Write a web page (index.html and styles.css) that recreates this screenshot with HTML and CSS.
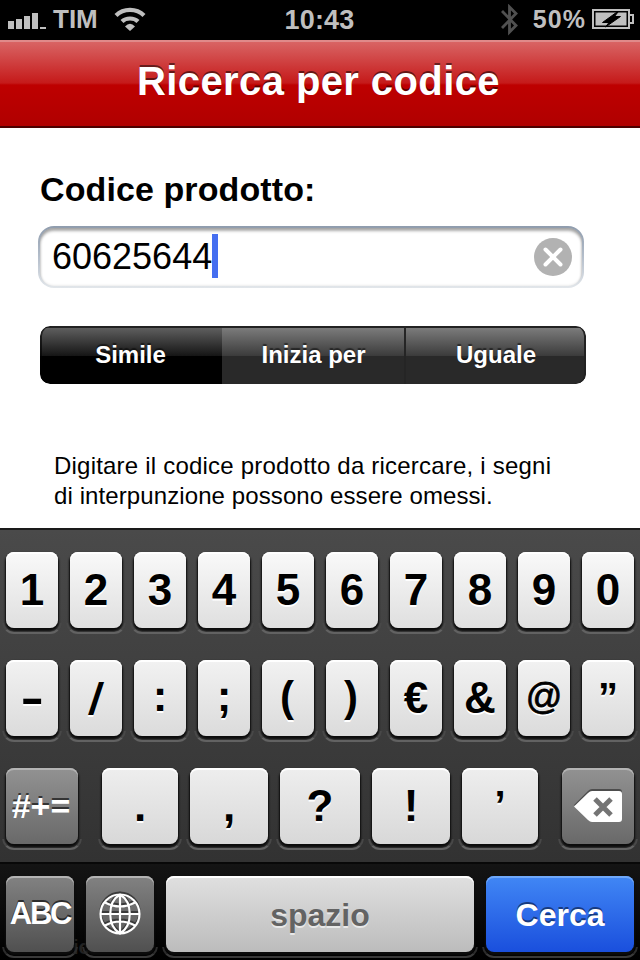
FILE: index.html
```html
<!DOCTYPE html>
<html lang="it">
<head>
    <meta charset="UTF-8">
    <title>Ricerca per codice</title>
    <link rel="stylesheet" href="styles.css">
</head>
<body>

    <div class="status">
        <div class="left">
            <svg class="signal" width="38" height="16" viewBox="0 0 38 16">
                <path d="M0 8h6v8H0zM8 6h6v10H8zM16 3h6v13h-6zM24 0h6v16h-6zM32 14h6v2h-6z"/>
            </svg>
            <span class="carrier">TIM</span>
            <svg class="wifi" width="32" height="24" viewBox="0 0 32 24">
                <path class="arc" d="M2 8.500C9.500 1 22.500 1 30 8.500M8 14.500C12 10.500 20 10.500 24 14.500"/>
                <path d="M11 19.500Q16 14 21 19.500L16 24z"/>
            </svg>
        </div>
        <div class="clock">10:43</div>
        <div class="right">
            <svg class="bluetooth" width="18" height="32" viewBox="0 0 18 32">
                <path d="M1 7L15 21.500L8.500 28V3L15 9.500L1 24"/>
            </svg>
            <span class="percent">50%</span>
            <svg class="battery" width="42" height="20" viewBox="0 0 42 20">
                <path class="case" d="M1 1h36v18H1zM38 6h3v8h-3"/>
                <path d="M3.500 3.500h31v13h-31z"/>
                <path class="bolt" d="M25 3L10.500 13.500H17L13.500 18L28.500 7.500H22.500L26 3z"/>
            </svg>
        </div>
    </div>

    <h1 class="navbar">Ricerca per codice</h1>

    <div class="content">
        <h2 class="label">Codice prodotto:</h2>
        <div class="field">
            <span class="value">60625644</span>
            <span class="caret"></span>
            <svg class="clear" width="38" height="38" viewBox="0 0 38 38">
                <circle cx="19" cy="19" r="19"/>
                <path d="M11.500 11.500L26.500 26.500M26.500 11.500L11.500 26.500"/>
            </svg>
        </div>
        <div class="segments">
            <div class="segment selected">Simile</div>
            <div class="segment">Inizia per</div>
            <div class="segment">Uguale</div>
        </div>
        <p class="hint">Digitare il codice prodotto da ricercare, i segni<br><span class="tight">di interpunzione possono essere omessi.</span></p>
    </div>

    <div class="keyboard">
        <div class="row">
            <div class="key">1</div>
            <div class="key">2</div>
            <div class="key">3</div>
            <div class="key">4</div>
            <div class="key">5</div>
            <div class="key">6</div>
            <div class="key">7</div>
            <div class="key">8</div>
            <div class="key">9</div>
            <div class="key">0</div>
        </div>
        <div class="row second">
            <div class="key"><span class="hyphen">-</span></div>
            <div class="key"><span class="slash">/</span></div>
            <div class="key raised">:</div>
            <div class="key raised">;</div>
            <div class="key paren">(</div>
            <div class="key paren">)</div>
            <div class="key">€</div>
            <div class="key">&amp;</div>
            <div class="key at">@</div>
            <div class="key quote">”</div>
        </div>
        <div class="row third">
            <div class="key dark symbols">#+=</div>
            <div class="key w76 first">.</div>
            <div class="key w78">,</div>
            <div class="key w80">?</div>
            <div class="key w78">!</div>
            <div class="key w76 quote">’</div>
            <div class="key dark delete">
                <svg width="48" height="34" viewBox="0 0 48 34">
                    <path class="shade" d="M0 16L14 2Q16 0 18 0H45Q48 0 48 3V28Q48 32 45 32H18Q16 32 14 30z"/>
                    <path class="shape" d="M0 17.500L14 4Q16 2 18 2H45Q48 2 48 5V30Q48 33 45 33H18Q16 33 14 31z"/>
                    <path class="cross" d="M21 10L37 26M37 10L21 26"/>
                </svg>
            </div>
        </div>
        <div class="row bottom">
            <span class="behind">ic</span>
            <div class="key dark abc">ABC</div>
            <div class="key dark globe">
                <svg width="42" height="44" viewBox="0 0 42 44">
                    <defs>
                        <g id="globe">
                            <circle cx="21" cy="21" r="19.500"/>
                            <path d="M21 1.500V40.500M1.500 21H40.500M21 1.500C8 9 8 33 21 40.500C34 33 34 9 21 1.500M6 9.500Q21 17.500 36 9.500M6 32.500Q21 24.500 36 32.500"/>
                        </g>
                    </defs>
                    <use class="shade" href="#globe"/>
                    <use class="lines" href="#globe" y="2"/>
                </svg>
            </div>
            <div class="key space">spazio</div>
            <div class="key search">Cerca</div>
        </div>
    </div>

</body>
</html>
```
FILE: styles.css
```css
*{
    margin: 0;
    padding: 0;
    box-sizing: border-box;
}
body{
    width: 640px;
    height: 960px;
    overflow: hidden;
    background-color: #fff;
    font-family: "Liberation Sans", Arial, sans-serif;
    color: #000;
}

/* status bar */
.status{
    display: grid;
    grid-template-columns: 1fr auto 1fr;
    height: 40px;
    padding: 0 6px 0 8px;
    background-color: #000;
    color: #bfbfbf;
    font-weight: bold;
    line-height: 38px;
}
.status svg{
    fill: #bfbfbf;
}
.left,.right{
    display: flex;
    align-items: flex-start;
}
.right{
    justify-content: flex-end;
}
.signal{
    margin-top: 13px;
}
.carrier{
    margin-left: 7px;
    font-size: 26px;
}
.wifi{
    margin: 7px 0 0 16px;
}
.wifi .arc{
    fill: none;
    stroke: #bfbfbf;
    stroke-width: 4.2;
}
.clock{
    padding-right: 3px;
    font-size: 27px;
    line-height: 40px;
    letter-spacing: .2px;
}
.bluetooth{
    margin: 4px 14px 0 0;
}
.status .bluetooth{
    fill: none;
    stroke: #505050;
    stroke-width: 2.8;
}
.percent{
    margin-right: 6px;
    font-size: 25px;
    letter-spacing: 1.1px;
}
.battery{
    margin-top: 9px;
}
.battery .case{
    fill: none;
    stroke: #bfbfbf;
    stroke-width: 2;
}
.battery .bolt{
    fill: #000;
    stroke: #000;
    stroke-linejoin: round;
}

/* title */
.navbar{
    height: 88px;
    padding-right: 3px;
    border-top: 2px solid #e08a8a;
    border-bottom: 2px solid #4c0000;
    background: linear-gradient(#d96464, #c51a1a 41px, #be0000 43px, #b00000);
    color: #fff;
    font-size: 40px;
    line-height: 79px;
    letter-spacing: .4px;
    text-align: center;
    text-shadow: 0 -2px 0 rgba(0,0,0,.5);
}

/* form */
.content{
    height: 400px;
    padding: 42px 54px 0 38px;
}
.label{
    padding-left: 2px;
    font-size: 34px;
    line-height: 38px;
    letter-spacing: .1px;
}
.field{
    display: flex;
    align-items: center;
    width: 546px;
    height: 62px;
    margin-top: 18px;
    padding: 0 10px 0 12px;
    border: 2px solid transparent;
    border-radius: 16px;
    background: linear-gradient(#fff, #fff) padding-box, linear-gradient(#8f9cad, #b4becb 50%, #e2e6ea) border-box;
    box-shadow: inset 0 3px 3px rgba(0,0,0,.32), inset 0 0 3px rgba(0,0,0,.15);
}
.value{
    font-size: 36px;
    line-height: 58px;
}
.caret{
    width: 6px;
    height: 44px;
    margin-bottom: 2px;
    background-color: #456ef0;
}
.clear{
    margin-left: auto;
    fill: #b2b2b2;
}
.clear path{
    stroke: #fff;
    stroke-width: 4;
    stroke-linecap: round;
}
.segments{
    display: grid;
    grid-template-columns: 182px 182px 182px;
    width: 546px;
    height: 58px;
    margin: 38px 0 0 2px;
    border-radius: 10px;
    overflow: hidden;
}
.segment{
    background: linear-gradient(#222 2px, #7b7b7b 2px, #3b3b3b 30px, #292929 30px, #292929);
    color: #fff;
    font-size: 24px;
    font-weight: bold;
    line-height: 58px;
    text-align: center;
    text-shadow: 0 -2px 1px rgba(0,0,0,.5);
}
.segment + .segment{
    padding-left: 1px;
}
.segment + .segment + .segment{
    padding-left: 0;
    border-left: 2px solid #252525;
    border-radius: 0 10px 10px 0;
    box-shadow: inset -2px 0 0 #222;
}
.segment.selected{
    padding-right: 1px;
    background: linear-gradient(#222 2px, #5e5e5e 2px, #151515 30px, #000 30px, #000);
    border-radius: 10px 0 0 10px;
    box-shadow: inset 2px 0 0 rgba(0,0,0,.6);
}
.hint{
    padding: 67px 0 0 16px;
    font-size: 24px;
    line-height: 30px;
    letter-spacing: .21px;
    white-space: nowrap;
}
.tight{
    letter-spacing: .1px;
}

/* keyboard */
.keyboard{
    height: 432px;
    border-top: 2px solid #1a1a1a;
    background: linear-gradient(#4a4a4a, #323232 332px, #080808 332px, #080808 334px, #141414 334px, #000);
}
.row{
    display: flex;
    gap: 12px;
    height: 108px;
    padding: 22px 6px 0;
}
.key{
    position: relative;
    display: flex;
    justify-content: center;
    width: 52px;
    height: 76px;
    border-radius: 8px;
    background: linear-gradient(#f9f9f9, #dfdfdf);
    box-shadow: inset 0 2px 0 #fff, 0 2px 2px 1px #0c0c0c;
    font-size: 44px;
    font-weight: bold;
    line-height: 76px;
    text-shadow: 0 2px 0 #fff;
}
/* lit rim of the well each key sits in */
.key::after{
    content: "";
    position: absolute;
    left: -4px;
    right: -4px;
    bottom: -6px;
    height: 14px;
    border: 2px solid #626262;
    border-color: transparent #484848 #626262;
    border-top: 0;
    border-radius: 0 0 12px 12px;
    clip-path: inset(5px 0 0 0);
}
.second .key{
    background: linear-gradient(#f2f2f2, #dbdbdb);
}
.third .key{
    background: linear-gradient(#eee, #d8d8d8);
}
.hyphen{
    transform: scaleX(1.6);
}
.slash{
    transform: skewX(-8deg);
    line-height: 77px;
}
.key.raised{
    line-height: 72px;
}
.paren{
    padding-right: 2px;
    font-size: 42px;
    line-height: 74px;
}
.at{
    font-size: 36px;
    font-weight: normal;
    line-height: 74px;
    -webkit-text-stroke: .8px #000;
}
.key.quote{
    font-size: 40px;
    line-height: 75px;
}
.w76{
    width: 76px;
}
.w78{
    width: 78px;
}
.w80{
    width: 80px;
}
.first{
    margin-left: 12px;
}
.third .dark,.bottom .dark{
    width: 72px;
    background: linear-gradient(#929292, #696969);
    box-shadow: inset 0 2px 0 #b4b4b4, 0 2px 2px 1px #0c0c0c;
    color: #fff;
    text-shadow: 0 -2px 0 rgba(0,0,0,.6);
}
.symbols{
    padding-right: 2px;
    font-size: 34px;
}
.delete{
    margin-left: 12px;
    align-items: center;
}
.delete .shade{
    fill: #4d4d4d;
}
.delete .shape{
    fill: #fff;
}
.delete .cross{
    stroke: #747474;
    stroke-width: 5;
}
.bottom{
    position: relative;
}
.bottom .dark{
    width: 68px;
    background: linear-gradient(#828282, #505050);
}
.bottom .key::after{
    border-color: transparent #2c2c2c #3a3a3a;
}
.bottom .abc{
    font-size: 31px;
    letter-spacing: -2.3px;
}
.globe{
    align-items: center;
}
.globe svg{
    margin-bottom: 3px;
}
.globe .shade,.globe .lines{
    fill: none;
    stroke: #3a3a3a;
    stroke-width: 2.2;
}
.globe .lines{
    stroke: #fff;
}
.bottom .space{
    width: 308px;
    background: linear-gradient(#e0e0e0, #bcbcbc);
    color: #636363;
    font-size: 32px;
    line-height: 78px;
    text-shadow: 0 2px 0 #e8e8e8;
}
.bottom .search{
    width: 148px;
    background: linear-gradient(#4187f5, #1a4fdd);
    box-shadow: inset 0 2px 0 #6fa8fa, 0 2px 2px 1px #0c0c0c;
    color: #fff;
    font-size: 32px;
    line-height: 78px;
    text-shadow: 0 -2px 0 #173a80;
}
/* tab bar label showing faintly under the keys */
.behind{
    position: absolute;
    left: 73px;
    bottom: 3px;
    color: #222;
    font-size: 20px;
    font-weight: bold;
}
```
